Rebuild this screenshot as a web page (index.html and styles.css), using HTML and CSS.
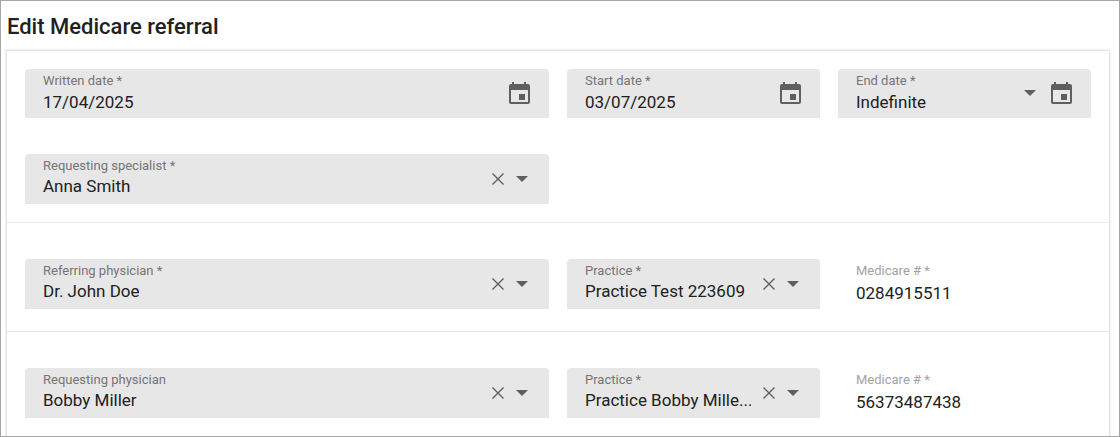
FILE: index.html
```html
<!DOCTYPE html>
<html lang="en">
<head>
    <meta charset="UTF-8">
    <meta name="viewport" content="width=device-width, initial-scale=1.0">
    <title>Edit Medicare referral</title>
    <link rel="stylesheet" href="styles.css">
</head>
<body>
    <!-- shared icons -->
    <svg class="sprite" aria-hidden="true">
        <symbol id="calendar" viewBox="0 0 22 24">
            <path d="M4 1h2v2h10V1h2v2h2a2 2 0 0 1 2 2V21a2 2 0 0 1-2 2H3a2 2 0 0 1-2-2V5a2 2 0 0 1 2-2h1zM3 9v12h17V9zM11 13h6v6h-6z" fill-rule="evenodd"/>
        </symbol>
        <symbol id="clear" viewBox="0 0 12 12">
            <path d="M0.500 0.500l11 11M11.500 0.500l-11 11" fill="none" stroke="currentColor" stroke-width="1.400"/>
        </symbol>
        <symbol id="arrow" viewBox="0 0 12 6">
            <path d="M0 0h12L6 6z"/>
        </symbol>
    </svg>

    <h1>Edit Medicare referral</h1>
    <form class="card">
        <div class="section first">
            <div class="field date wide">
                <div class="text">
                    <label for="written">Written date *</label>
                    <input type="text" id="written" value="17/04/2025">
                </div>
                <button type="button" aria-label="Pick written date"><svg class="calendar"><use href="#calendar"/></svg></button>
            </div>
            <div class="field date">
                <div class="text">
                    <label for="start">Start date *</label>
                    <input type="text" id="start" value="03/07/2025">
                </div>
                <button type="button" aria-label="Pick start date"><svg class="calendar"><use href="#calendar"/></svg></button>
            </div>
            <div class="field date">
                <div class="text">
                    <label for="end">End date *</label>
                    <select id="end">
                        <option>Indefinite</option>
                    </select>
                </div>
                <svg class="arrow"><use href="#arrow"/></svg>
                <button type="button" aria-label="Pick end date"><svg class="calendar"><use href="#calendar"/></svg></button>
            </div>
            <div class="field wide">
                <div class="text">
                    <label for="specialist">Requesting specialist *</label>
                    <select id="specialist">
                        <option>Anna Smith</option>
                    </select>
                </div>
                <button type="button" aria-label="Clear specialist"><svg class="clear"><use href="#clear"/></svg></button>
                <svg class="arrow"><use href="#arrow"/></svg>
            </div>
        </div>

        <div class="section">
            <div class="field wide">
                <div class="text">
                    <label for="referring">Referring physician *</label>
                    <select id="referring">
                        <option>Dr. John Doe</option>
                    </select>
                </div>
                <button type="button" aria-label="Clear referring physician"><svg class="clear"><use href="#clear"/></svg></button>
                <svg class="arrow"><use href="#arrow"/></svg>
            </div>
            <div class="field">
                <div class="text">
                    <label for="practice1">Practice *</label>
                    <select id="practice1">
                        <option>Practice Test 223609</option>
                    </select>
                </div>
                <button type="button" aria-label="Clear practice"><svg class="clear"><use href="#clear"/></svg></button>
                <svg class="arrow"><use href="#arrow"/></svg>
            </div>
            <div class="field readonly">
                <div class="text">
                    <label for="medicare1">Medicare # *</label>
                    <input type="text" id="medicare1" value="0284915511" readonly>
                </div>
            </div>
        </div>

        <div class="section">
            <div class="field wide">
                <div class="text">
                    <label for="requesting">Requesting physician</label>
                    <select id="requesting">
                        <option>Bobby Miller</option>
                    </select>
                </div>
                <button type="button" aria-label="Clear requesting physician"><svg class="clear"><use href="#clear"/></svg></button>
                <svg class="arrow"><use href="#arrow"/></svg>
            </div>
            <div class="field">
                <div class="text">
                    <label for="practice2">Practice *</label>
                    <select id="practice2">
                        <option>Practice Bobby Mille...</option>
                    </select>
                </div>
                <button type="button" aria-label="Clear practice"><svg class="clear"><use href="#clear"/></svg></button>
                <svg class="arrow"><use href="#arrow"/></svg>
            </div>
            <div class="field readonly">
                <div class="text">
                    <label for="medicare2">Medicare # *</label>
                    <input type="text" id="medicare2" value="56373487438" readonly>
                </div>
            </div>
        </div>
    </form>
</body>
</html>
```
FILE: styles.css
```css
* {
    box-sizing: border-box;
}
body {
    margin: 0;
    min-height: 100vh;
    display: flex;
    flex-direction: column;
    padding: 0 10px 0 6px;
    border: 1px solid #a6a6a6;
    background-color: #fff;
    color: #212121;
    font-family: Roboto, sans-serif;
}
.sprite {
    display: none;
}
h1 {
    margin: 0;
    padding: 11px 0 9px;
    font-size: 22px;
    line-height: 30px;
    font-weight: 500;
}
.card {
    flex: 1;
    box-shadow: 0 0 2px 1px rgba(0, 0, 0, 0.16);
    clip-path: inset(-3px -3px 0 -3px);
}
.section {
    display: grid;
    grid-template-columns: repeat(4, 1fr);
    gap: 36px 18px;
    padding: 36px 18px 22px;
    border-bottom: 1px solid #e8e8e8;
}
.section.first {
    padding: 18px;
}
.section:last-child {
    border-bottom: none;
    padding-bottom: 18px;
}
.field {
    display: flex;
    align-items: center;
    gap: 12px;
    height: 50px;
    padding: 0 21px 1px 18px;
    border-radius: 4px 4px 0 0;
    background-color: #e7e7e7;
    color: #5f5f5f;
}
.field.date {
    height: 49px;
    padding-right: 19px;
    gap: 14px;
}
.field.readonly {
    background: none;
}
.wide {
    grid-column: span 2;
}
.text {
    flex: 1;
    min-width: 0;
    align-self: flex-start;
    display: flex;
    flex-direction: column;
    gap: 1px;
    padding-top: 4px;
}
label {
    font-size: 13px;
    line-height: 16px;
    color: #757575;
}
input, select {
    width: 100%;
    height: 22px;
    margin: 0;
    padding: 0;
    border: none;
    background: none;
    appearance: none;
    font-family: inherit;
    font-size: 17px;
    line-height: 22px;
    color: #212121;
}
.date .text {
    gap: 2px;
}
.readonly .text {
    gap: 3px;
}
.readonly label {
    color: #a3a3a3;
}
button {
    display: flex;
    padding: 0;
    border: none;
    background: none;
    color: inherit;
    cursor: pointer;
}
svg {
    fill: currentColor;
}
.calendar {
    width: 22px;
    height: 24px;
}
.clear {
    width: 12px;
    height: 12px;
}
.arrow {
    width: 12px;
    height: 6px;
}
```
